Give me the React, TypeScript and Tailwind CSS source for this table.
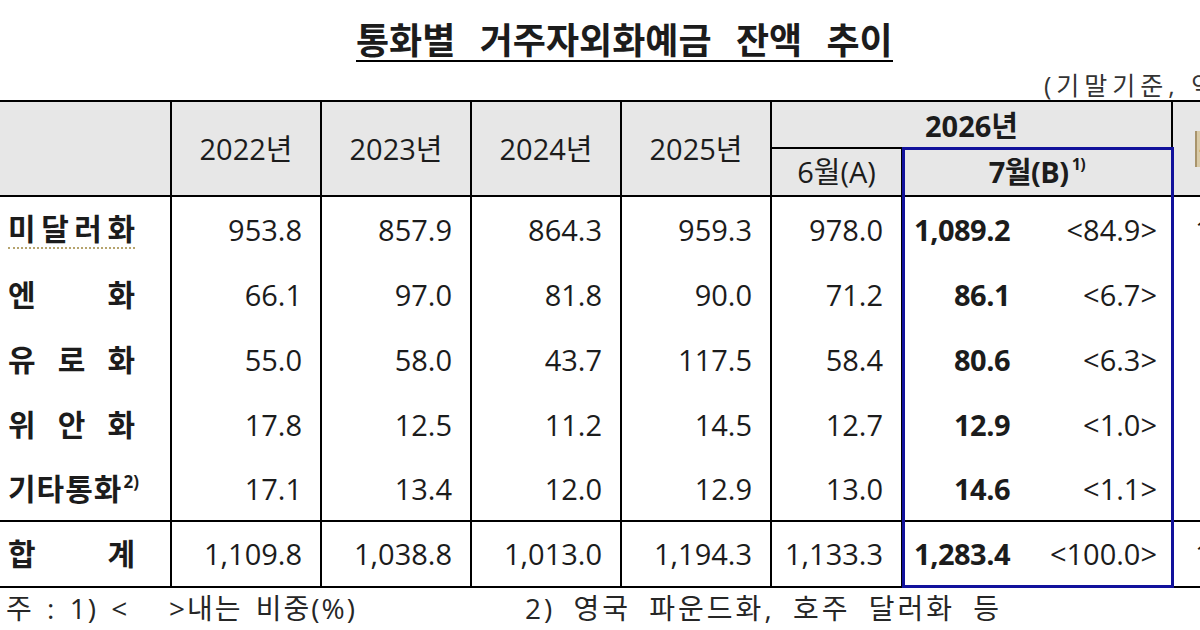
const rows = [
  { label: ['미', '달', '러', '화'], vals: ['953.8', '857.9', '864.3', '959.3', '978.0'], cur: '1,089.2', share: '<84.9>', diff: '111.2', dotted: true },
  { label: ['엔', '화'], vals: ['66.1', '97.0', '81.8', '90.0', '71.2'], cur: '86.1', share: '<6.7>', diff: '14.9' },
  { label: ['유', '로', '화'], vals: ['55.0', '58.0', '43.7', '117.5', '58.4'], cur: '80.6', share: '<6.3>', diff: '22.2' },
  { label: ['위', '안', '화'], vals: ['17.8', '12.5', '11.2', '14.5', '12.7'], cur: '12.9', share: '<1.0>', diff: '0.2' },
  { label: ['기타통화'], sup: '2)', vals: ['17.1', '13.4', '12.0', '12.9', '13.0'], cur: '14.6', share: '<1.1>', diff: '1.6' },
];

const total = { label: ['합', '계'], vals: ['1,109.8', '1,038.8', '1,013.0', '1,194.3', '1,133.3'], cur: '1,283.4', share: '<100.0>', diff: '150.1' };

const years = ['2022년', '2023년', '2024년', '2025년'];

const head = 'bg-[#e7e7e7] border-black flex items-center justify-center';

const App = () => {
  const renderRow = (r: typeof total & { sup?: string; dotted?: boolean }, last: boolean, key: string) => {
    const b = last ? 'border-b-2' : '';
    const single = r.label.length === 1;
    return [
      <div key={`${key}-l`} className={`border-r-2 border-black ${b} flex items-center pl-[8px]`}>
        <div
          className={`${single ? '' : 'w-[127px] justify-between'} flex whitespace-nowrap text-[30px] font-bold leading-[36px] ${
            r.dotted ? 'border-b-2 border-dotted border-[#b6a46e]' : ''
          }`}
        >
          {r.label.map((c, i) => (
            <span key={i} className={single ? 'tracking-[1px]' : ''}>{c}</span>
          ))}
          {r.sup && <span className="text-[17px] leading-[17px] font-bold ml-[1px] mt-[2px]">{r.sup}</span>}
        </div>
      </div>,
      ...r.vals.map((v, i) => (
        <div key={`${key}-${i}`} className={`border-r-2 border-black ${b} flex items-center justify-end pr-[18px]`}>
          {v}
        </div>
      )),
      <div key={`${key}-c`} className={`border-r-2 border-black ${b} flex items-center`}>
        <div className="w-[107px] text-right font-bold tracking-[-0.5px]">{r.cur}</div>
        <div className="flex-1 text-right pr-[14px]">{r.share}</div>
      </div>,
      <div key={`${key}-d`} className={`border-black ${b} flex items-center justify-end pr-[18px]`}>
        {r.diff}
      </div>,
    ];
  };

  return (
    <div className="w-[1200px] h-[630px] overflow-hidden bg-white text-[#1c1c1c] font-['Open_Sans','Noto_Sans_CJK_KR',sans-serif]">
      <div className="h-[62px] pl-[356px] pt-[21px]">
        <h1 className="inline-block whitespace-nowrap text-[36px] leading-[39px] font-bold border-b-2 border-black [word-spacing:15px]">
          통화별 거주자외화예금 잔액 추이
        </h1>
      </div>

      <div className="h-[38px] pl-[1044px] pt-[8px] text-[25px] leading-[30px] whitespace-nowrap text-[#333] tracking-[5px]">
        (기말기준, 억달러)
      </div>

      <div className="relative w-[1287px] border-y-2 border-black">
        <div className="grid grid-cols-[172px_150px_150px_150px_150px_131px_270px_114px] grid-rows-[47px_48px_65px_65px_65px_65px_65px_64px] text-[29px] leading-[36px]">
          <div className={`${head} row-span-2 border-r-2 border-b-2`} />
          {years.map((y) => (
            <div key={y} className={`${head} row-span-2 border-r-2 border-b-2`}>
              {y}
            </div>
          ))}
          <div className={`${head} col-span-2 border-r-2 border-b-2 font-bold pt-[2px]`}>2026년</div>
          <div className={`${head} row-span-2 border-b-2 !justify-start pl-[22px]`}>
            <span className="bg-[#d9cba8] border-l-2 border-[#a8946c] text-[22px] font-bold px-[2px] text-[#6b5a3a]">증감</span>
          </div>
          <div className={`${head} border-r-2 border-b-2`}>6월(A)</div>
          <div className={`${head} border-r-2 border-b-2 font-bold tracking-[-0.5px]`}>
            7월(B)<span className="text-[16px] leading-[16px] self-start mt-[7px] ml-[3px]">1)</span>
          </div>

          {rows.map((r, i) => renderRow(r, i === rows.length - 1, `r${i}`))}
          {renderRow(total, false, 'total')}
        </div>

        {/* 7월 강조 박스 */}
        <div className="absolute left-[902px] top-[45px] w-[272px] h-[441px] border-[3px] border-[#12129c] pointer-events-none" />
      </div>

      <div className="flex items-center h-[40px] text-[28px] leading-[34px] text-[#262626] whitespace-pre">
        <div className="w-[525px] pl-[6px] tracking-[2px] [word-spacing:4px]">주 : 1) &lt;   &gt;내는 비중(%)</div>
        <div className="tracking-[3px] [word-spacing:8px]">2) 영국 파운드화, 호주 달러화 등</div>
      </div>
    </div>
  );
};

export default App;
